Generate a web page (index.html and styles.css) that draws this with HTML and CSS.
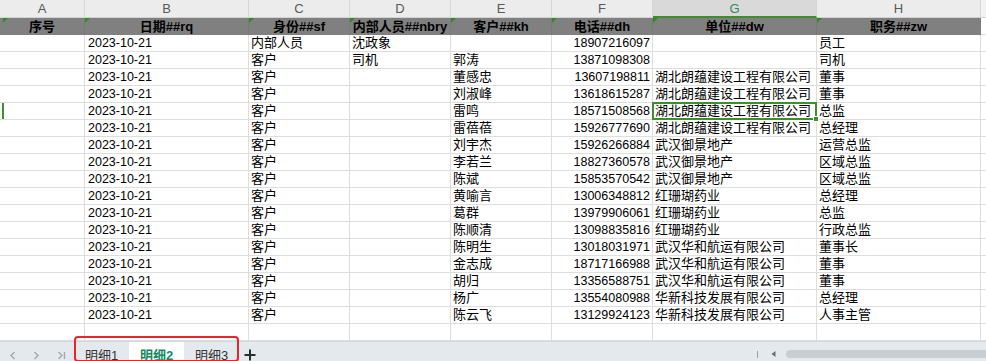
FILE: index.html
```html
<!DOCTYPE html>
<html lang="zh-CN">
<head>
    <meta charset="UTF-8">
    <title>明细2</title>
    <link rel="stylesheet" href="styles.css">
</head>
<body>

<div class="sheet">
    <!-- Grid: column letters, header row, data rows -->
    <div class="grid">
        <div class="col-letter">A</div>
        <div class="col-letter">B</div>
        <div class="col-letter">C</div>
        <div class="col-letter">D</div>
        <div class="col-letter">E</div>
        <div class="col-letter">F</div>
        <div class="col-letter active">G</div>
        <div class="col-letter">H</div>
        <div class="col-letter edge"></div>

        <div class="head first">序号</div>
        <div class="head">日期##rq</div>
        <div class="head">身份##sf</div>
        <div class="head">内部人员##nbry</div>
        <div class="head">客户##kh</div>
        <div class="head">电话##dh</div>
        <div class="head">单位##dw</div>
        <div class="head">职务##zw</div>
        <div class="cell edge"></div>

        <div class="cell"></div><div class="cell date">2023-10-21</div><div class="cell">内部人员</div><div class="cell">沈政象</div><div class="cell"></div><div class="cell phone">18907216097</div><div class="cell"></div><div class="cell">员工</div><div class="cell edge"></div>
        <div class="cell"></div><div class="cell date">2023-10-21</div><div class="cell">客户</div><div class="cell">司机</div><div class="cell">郭涛</div><div class="cell phone">13871098308</div><div class="cell"></div><div class="cell">司机</div><div class="cell edge"></div>
        <div class="cell"></div><div class="cell date">2023-10-21</div><div class="cell">客户</div><div class="cell"></div><div class="cell">董感忠</div><div class="cell phone">13607198811</div><div class="cell">湖北朗蕴建设工程有限公司</div><div class="cell">董事</div><div class="cell edge"></div>
        <div class="cell"></div><div class="cell date">2023-10-21</div><div class="cell">客户</div><div class="cell"></div><div class="cell">刘淑峰</div><div class="cell phone">13618615287</div><div class="cell">湖北朗蕴建设工程有限公司</div><div class="cell">董事</div><div class="cell edge"></div>
        <div class="cell marked"></div><div class="cell date">2023-10-21</div><div class="cell">客户</div><div class="cell"></div><div class="cell">雷鸣</div><div class="cell phone">18571508568</div><div class="cell selected">湖北朗蕴建设工程有限公司</div><div class="cell">总监</div><div class="cell edge"></div>
        <div class="cell"></div><div class="cell date">2023-10-21</div><div class="cell">客户</div><div class="cell"></div><div class="cell">雷蓓蓓</div><div class="cell phone">15926777690</div><div class="cell">湖北朗蕴建设工程有限公司</div><div class="cell">总经理</div><div class="cell edge"></div>
        <div class="cell"></div><div class="cell date">2023-10-21</div><div class="cell">客户</div><div class="cell"></div><div class="cell">刘宇杰</div><div class="cell phone">15926266884</div><div class="cell">武汉御景地产</div><div class="cell">运营总监</div><div class="cell edge"></div>
        <div class="cell"></div><div class="cell date">2023-10-21</div><div class="cell">客户</div><div class="cell"></div><div class="cell">李若兰</div><div class="cell phone">18827360578</div><div class="cell">武汉御景地产</div><div class="cell">区域总监</div><div class="cell edge"></div>
        <div class="cell"></div><div class="cell date">2023-10-21</div><div class="cell">客户</div><div class="cell"></div><div class="cell">陈斌</div><div class="cell phone">15853570542</div><div class="cell">武汉御景地产</div><div class="cell">区域总监</div><div class="cell edge"></div>
        <div class="cell"></div><div class="cell date">2023-10-21</div><div class="cell">客户</div><div class="cell"></div><div class="cell">黄喻言</div><div class="cell phone">13006348812</div><div class="cell">红珊瑚药业</div><div class="cell">总经理</div><div class="cell edge"></div>
        <div class="cell"></div><div class="cell date">2023-10-21</div><div class="cell">客户</div><div class="cell"></div><div class="cell">葛群</div><div class="cell phone">13979906061</div><div class="cell">红珊瑚药业</div><div class="cell">总监</div><div class="cell edge"></div>
        <div class="cell"></div><div class="cell date">2023-10-21</div><div class="cell">客户</div><div class="cell"></div><div class="cell">陈顺清</div><div class="cell phone">13098835816</div><div class="cell">红珊瑚药业</div><div class="cell">行政总监</div><div class="cell edge"></div>
        <div class="cell"></div><div class="cell date">2023-10-21</div><div class="cell">客户</div><div class="cell"></div><div class="cell">陈明生</div><div class="cell phone">13018031971</div><div class="cell">武汉华和航运有限公司</div><div class="cell">董事长</div><div class="cell edge"></div>
        <div class="cell"></div><div class="cell date">2023-10-21</div><div class="cell">客户</div><div class="cell"></div><div class="cell">金志成</div><div class="cell phone">18717166988</div><div class="cell">武汉华和航运有限公司</div><div class="cell">董事</div><div class="cell edge"></div>
        <div class="cell"></div><div class="cell date">2023-10-21</div><div class="cell">客户</div><div class="cell"></div><div class="cell">胡归</div><div class="cell phone">13356588751</div><div class="cell">武汉华和航运有限公司</div><div class="cell">董事</div><div class="cell edge"></div>
        <div class="cell"></div><div class="cell date">2023-10-21</div><div class="cell">客户</div><div class="cell"></div><div class="cell">杨广</div><div class="cell phone">13554080988</div><div class="cell">华新科技发展有限公司</div><div class="cell">总经理</div><div class="cell edge"></div>
        <div class="cell"></div><div class="cell date">2023-10-21</div><div class="cell">客户</div><div class="cell"></div><div class="cell">陈云飞</div><div class="cell phone">13129924123</div><div class="cell">华新科技发展有限公司</div><div class="cell">人事主管</div><div class="cell edge"></div>

        <!-- empty last row -->
        <div class="cell"></div><div class="cell"></div><div class="cell"></div><div class="cell"></div><div class="cell"></div><div class="cell"></div><div class="cell"></div><div class="cell"></div><div class="cell edge"></div>
    </div>

    <!-- Sheet tabs + horizontal scroll -->
    <div class="tabbar">
        <div class="tab-nav">
            <svg width="7" height="9" viewBox="0 0 7 9"><path d="M5.5 1 L2 4.5 L5.5 8" fill="none" stroke="#a3a8ad" stroke-width="1.4"/></svg>
            <svg width="7" height="9" viewBox="0 0 7 9"><path d="M1.5 1 L5 4.5 L1.5 8" fill="none" stroke="#a3a8ad" stroke-width="1.4"/></svg>
            <svg width="9" height="9" viewBox="0 0 9 9"><path d="M1.5 1 L5 4.5 L1.5 8 M7.5 1 V8" fill="none" stroke="#a3a8ad" stroke-width="1.4"/></svg>
        </div>
        <div class="tabs">
            <div class="tab">明细1</div>
            <div class="tab current">明细2</div>
            <div class="tab">明细3</div>
        </div>
        <div class="add-tab">
            <svg width="12" height="12" viewBox="0 0 12 12"><path d="M6 0.5 V11.5 M0.5 6 H11.5" stroke="#2b2b2b" stroke-width="2"/></svg>
        </div>
        <div class="hscroll">
            <span class="hscroll-sep"></span>
            <svg width="5" height="6" viewBox="0 0 5 6"><path d="M4.5 0 V6 L0.5 3 Z" fill="#6b6f73"/></svg>
            <div class="hscroll-thumb"></div>
        </div>
    </div>
</div>

</body>
</html>
```

FILE: styles.css
```css
body {
    margin: 0;
    font-family: "Liberation Sans", "Noto Sans CJK SC", sans-serif;
    font-size: 13px;
    color: #000;
    background-color: #fff;
    overflow: hidden;
}

.sheet {
    width: 986px;
    height: 361px;
    display: flex;
    flex-direction: column;
}

.grid {
    display: grid;
    grid-template-columns: 85px 164px 101px 101px 101px 101px 164px 164px 5px;
    grid-template-rows: 18px 17px;
    grid-auto-rows: 17px;
}

.grid > div {
    box-sizing: border-box;
    white-space: nowrap;
    overflow: hidden;
    line-height: 16px;
}

.col-letter {
    background-color: #ececec;
    border-right: 1px solid #d6d6d6;
    border-bottom: 1px solid #d2d2d2;
    color: #595959;
    text-align: center;
    font-size: 13px;
    line-height: 17px !important;
}

.col-letter.active {
    background-color: #d9d9d9;
    border-bottom: 2px solid #3d8f2c;
    color: #2f8a5e;
}

.col-letter.edge {
    background-color: #f2f2f2;
    border-right: none;
}

.head {
    position: relative;
    background-color: #808080;
    border-right: 1px solid #7a7a7a;
    font-weight: bold;
    text-align: center;
    line-height: 17px !important;
}

/* green error triangles in the header cells */
.head::before {
    content: "";
    position: absolute;
    left: 0;
    top: 0;
    border-top: 5px solid #2e8b22;
    border-right: 5px solid transparent;
}

.head.first::before {
    left: 3px;
}

.cell {
    position: relative;
    border-right: 1px solid #dedede;
    border-bottom: 1px solid #dedede;
    padding: 0 2px;
}

.cell.edge {
    border-right: none;
    padding: 0;
}

.date {
    padding-left: 3px;
    font-size: 12.5px;
}

.phone {
    text-align: right;
    font-size: 12.5px;
}

/* current row marker on the left edge */
.marked::before {
    content: "";
    position: absolute;
    left: 2px;
    top: 0;
    bottom: 0;
    width: 2px;
    background-color: #3d8f2c;
}

/* active cell frame with fill handle */
.selected {
    overflow: visible !important;
}

.selected::after {
    content: "";
    position: absolute;
    left: -1px;
    top: -1px;
    right: -1px;
    bottom: -1px;
    border: 2px solid #3d8f2c;
}

.selected::before {
    content: "";
    position: absolute;
    right: -3px;
    bottom: -3px;
    width: 4px;
    height: 4px;
    background-color: #3d8f2c;
    border: 1px solid #fff;
    z-index: 2;
}

.tabbar {
    position: relative;
    display: flex;
    align-items: stretch;
    height: 20px;
    background-color: #e4e9ee;
    border-top: 1px solid #d3d8dd;
}

.tab-nav {
    width: 74px;
    display: flex;
    align-items: center;
    gap: 17px;
    padding-left: 9px;
    padding-top: 6px;
    box-sizing: border-box;
}

.tabs {
    position: relative;
    display: flex;
}

/* red annotation frame around the sheet tabs */
.tabs::after {
    content: "";
    position: absolute;
    left: 0;
    right: 0;
    top: -6px;
    bottom: 0;
    border: 2px solid #e8262a;
    border-radius: 4px;
}

.tab {
    width: 55px;
    text-align: center;
    color: #333;
    padding-top: 6px;
    line-height: 16px;
    box-sizing: border-box;
    overflow: hidden;
}

.tab.current {
    background-color: #fff;
    color: #158a62;
    font-weight: bold;
}

.add-tab {
    padding-left: 5px;
    padding-top: 7px;
}

.hscroll {
    margin-left: auto;
    width: 229px;
    display: flex;
    align-items: center;
    padding-top: 4px;
    box-sizing: border-box;
}

.hscroll-sep {
    width: 1px;
    height: 7px;
    background-color: #9aa0a6;
    margin-right: 13px;
}

.hscroll-thumb {
    flex: 1;
    height: 8px;
    margin-left: 10px;
    border-radius: 4px 0 0 4px;
    background-color: #c9ced3;
}
```
